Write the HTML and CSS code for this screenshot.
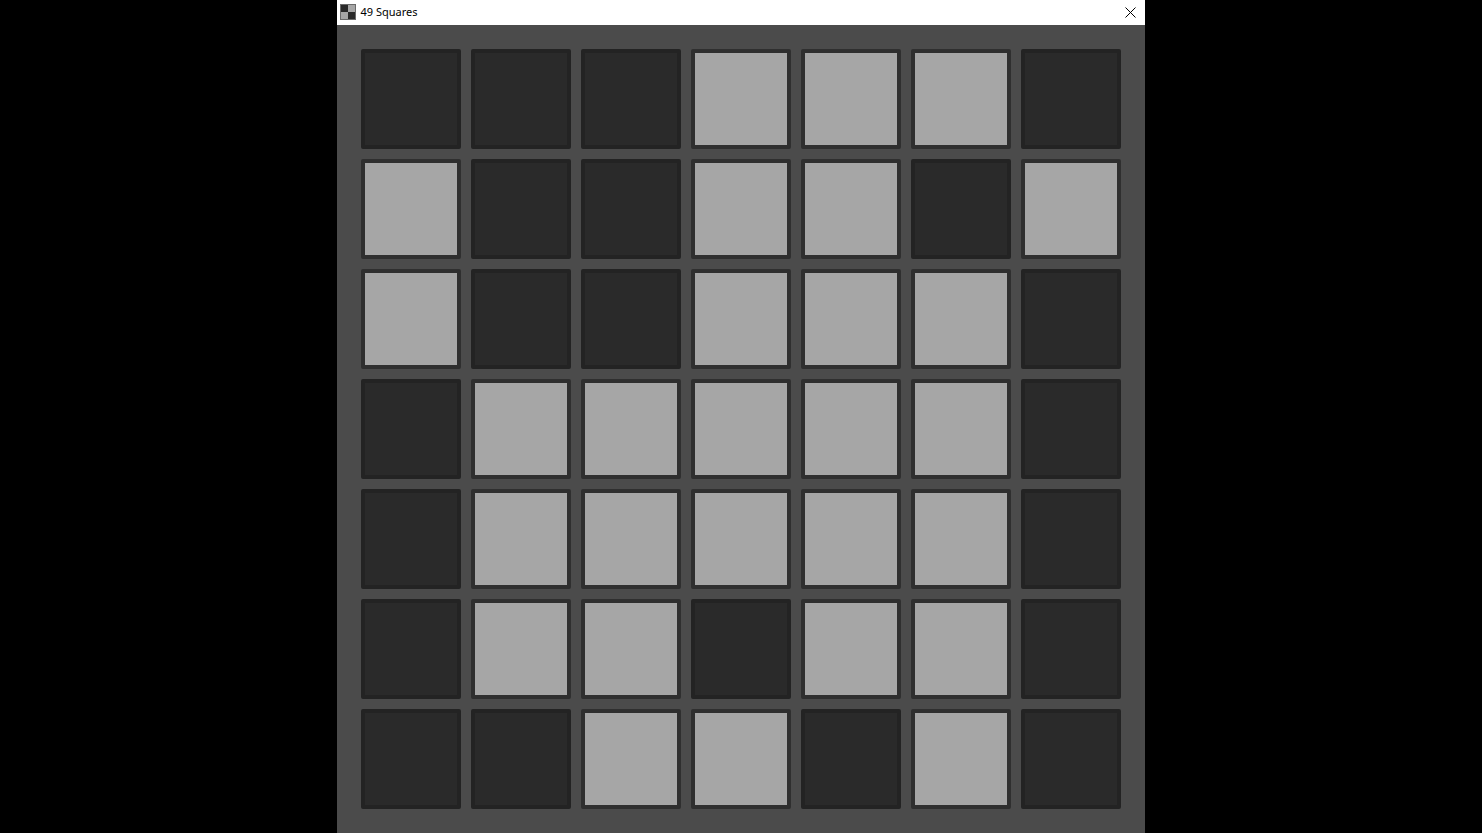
FILE: index.html
```html
<!DOCTYPE html>
<html>
  <head>
    <title>49 Squares</title>
    <link rel="stylesheet" href="styles.css">
  </head>
  <body>
    <div class="window">
      <div class="titlebar">
        <svg class="app-icon" width="16" height="16" viewBox="0 0 16 16">
          <rect width="16" height="16" fill="#6a6a6a"/>
          <rect x="1" y="1" width="7" height="7" fill="#292929"/>
          <rect x="8" y="1" width="7" height="7" fill="#a6a6a6"/>
          <rect x="1" y="8" width="7" height="7" fill="#a6a6a6"/>
          <rect x="8" y="8" width="7" height="7" fill="#292929"/>
        </svg>
        <span class="title">49 Squares</span>
        <svg class="close" width="11" height="11" viewBox="0 0 11 11">
          <path d="M0.5 0.5L10.5 10.5M10.5 0.5L0.5 10.5" stroke="#000" stroke-width="1" fill="none"/>
        </svg>
      </div>
      <div class="board">
        <div class="cell"></div><div class="cell"></div><div class="cell"></div><div class="cell on"></div><div class="cell on"></div><div class="cell on"></div><div class="cell"></div>
        <div class="cell on"></div><div class="cell"></div><div class="cell"></div><div class="cell on"></div><div class="cell on"></div><div class="cell"></div><div class="cell on"></div>
        <div class="cell on"></div><div class="cell"></div><div class="cell"></div><div class="cell on"></div><div class="cell on"></div><div class="cell on"></div><div class="cell"></div>
        <div class="cell"></div><div class="cell on"></div><div class="cell on"></div><div class="cell on"></div><div class="cell on"></div><div class="cell on"></div><div class="cell"></div>
        <div class="cell"></div><div class="cell on"></div><div class="cell on"></div><div class="cell on"></div><div class="cell on"></div><div class="cell on"></div><div class="cell"></div>
        <div class="cell"></div><div class="cell on"></div><div class="cell on"></div><div class="cell"></div><div class="cell on"></div><div class="cell on"></div><div class="cell"></div>
        <div class="cell"></div><div class="cell"></div><div class="cell on"></div><div class="cell on"></div><div class="cell"></div><div class="cell on"></div><div class="cell"></div>
      </div>
    </div>
  </body>
</html>
```

FILE: styles.css
```css
* {
  margin: 0;
  padding: 0;
  box-sizing: border-box;
}

html, body {
  height: 100%;
}

body {
  background: #000;
  font-family: 'Noto Sans', 'Open Sans', sans-serif;
  overflow: hidden;
  display: flex;
  justify-content: center;
}

.window {
  width: 808px;
  height: 833px;
  margin-left: -1px;
  display: flex;
  flex-direction: column;
  background: #4b4b4b;
}

.titlebar {
  height: 25px;
  background: #fff;
  display: flex;
  align-items: center;
  padding: 0 9px 0 3px;
  flex-shrink: 0;
}

.app-icon {
  margin-right: 5px;
  margin-bottom: 1px;
}

.title {
  font-size: 11px;
  line-height: 16px;
  margin-bottom: 1px;
  color: #000;
  flex: 1;
}

.board {
  display: grid;
  grid-template-columns: repeat(7, 100px);
  grid-auto-rows: 100px;
  gap: 10px;
  padding: 24px;
}

.cell {
  background: #2a2a2a;
  border: 4px solid #232323;
  border-radius: 2px;
}

.cell.on {
  background: #a6a6a6;
  border-color: #2f2f2f;
}
```
